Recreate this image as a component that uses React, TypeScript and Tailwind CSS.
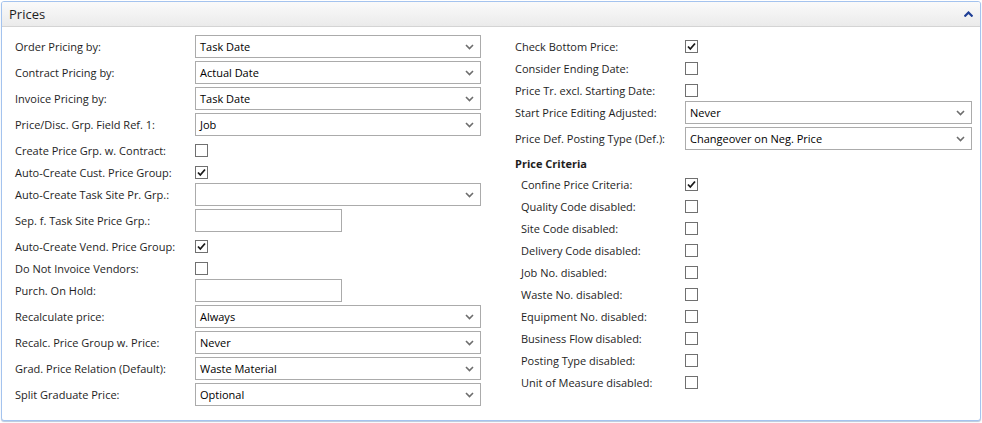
import React from 'react';

type Row =
  | { kind: 'select'; label: string; value: string }
  | { kind: 'input'; label: string }
  | { kind: 'check'; label: string; checked?: boolean };

const LEFT_ROWS: Row[] = [
  { kind: 'select', label: 'Order Pricing by:', value: 'Task Date' },
  { kind: 'select', label: 'Contract Pricing by:', value: 'Actual Date' },
  { kind: 'select', label: 'Invoice Pricing by:', value: 'Task Date' },
  { kind: 'select', label: 'Price/Disc. Grp. Field Ref. 1:', value: 'Job' },
  { kind: 'check', label: 'Create Price Grp. w. Contract:' },
  { kind: 'check', label: 'Auto-Create Cust. Price Group:', checked: true },
  { kind: 'select', label: 'Auto-Create Task Site Pr. Grp.:', value: '' },
  { kind: 'input', label: 'Sep. f. Task Site Price Grp.:' },
  { kind: 'check', label: 'Auto-Create Vend. Price Group:', checked: true },
  { kind: 'check', label: 'Do Not Invoice Vendors:' },
  { kind: 'input', label: 'Purch. On Hold:' },
  { kind: 'select', label: 'Recalculate price:', value: 'Always' },
  { kind: 'select', label: 'Recalc. Price Group w. Price:', value: 'Never' },
  { kind: 'select', label: 'Grad. Price Relation (Default):', value: 'Waste Material' },
  { kind: 'select', label: 'Split Graduate Price:', value: 'Optional' },
];

const RIGHT_ROWS: Row[] = [
  { kind: 'check', label: 'Check Bottom Price:', checked: true },
  { kind: 'check', label: 'Consider Ending Date:' },
  { kind: 'check', label: 'Price Tr. excl. Starting Date:' },
  { kind: 'select', label: 'Start Price Editing Adjusted:', value: 'Never' },
  { kind: 'select', label: 'Price Def. Posting Type (Def.):', value: 'Changeover on Neg. Price' },
];

const CRITERIA: Row[] = [
  { kind: 'check', label: 'Confine Price Criteria:', checked: true },
  { kind: 'check', label: 'Quality Code disabled:' },
  { kind: 'check', label: 'Site Code disabled:' },
  { kind: 'check', label: 'Delivery Code disabled:' },
  { kind: 'check', label: 'Job No. disabled:' },
  { kind: 'check', label: 'Waste No. disabled:' },
  { kind: 'check', label: 'Equipment No. disabled:' },
  { kind: 'check', label: 'Business Flow disabled:' },
  { kind: 'check', label: 'Posting Type disabled:' },
  { kind: 'check', label: 'Unit of Measure disabled:' },
];

const Checkbox: React.FC<{ checked?: boolean }> = ({ checked }) => (
  <div className="w-[13px] h-[13px] border border-[#707070] bg-white flex items-center justify-center">
    {checked && (
      <svg width="9" height="9" viewBox="0 0 9 9">
        <path d="M1 4.5 L3.3 7 L8 1.5" fill="none" stroke="#1a1a1a" strokeWidth="1.8" />
      </svg>
    )}
  </div>
);

const Chevron = () => (
  <svg width="9" height="6" viewBox="0 0 9 6" className="mr-[6px]">
    <path d="M1 1 L4.5 4.5 L8 1" fill="none" stroke="#6d6d6d" strokeWidth="1.6" />
  </svg>
);

const Field: React.FC<{ row: Row; labelW: string; indent?: boolean }> = ({ row, labelW, indent }) => {
  const label = (
    <div className={`${labelW} shrink-0 text-[#1e1e1e] ${indent ? 'pl-[6px]' : ''}`}>{row.label}</div>
  );
  if (row.kind === 'check') {
    return (
      <div className="flex items-center h-[22px]">
        {label}
        <Checkbox checked={row.checked} />
      </div>
    );
  }
  if (row.kind === 'input') {
    return (
      <div className="flex items-center h-[26px] pb-[3px]">
        {label}
        <div className="w-[147px] h-[23px] border border-[#ababab] bg-white" />
      </div>
    );
  }
  return (
    <div className="flex items-center h-[26px] pb-[3px]">
      {label}
      <div className="flex-1 h-[23px] border border-[#ababab] bg-white flex items-center justify-between">
        <span className="pl-[4px] text-black">{row.value}</span>
        <Chevron />
      </div>
    </div>
  );
};

export default function App() {
  return (
    <div
      className="w-[982px] h-[423px] bg-white p-px text-[11px] leading-none"
      style={{ fontFamily: '"Open Sans", "Noto Sans", sans-serif' }}
    >
      <div className="h-[420px] rounded-[3px] border border-[#a4c3ee] shadow-[0_1px_1px_#b9c9dc] bg-white flex flex-col overflow-hidden">
        {/* Header */}
        <div className="h-[25px] shrink-0 flex items-center justify-between pl-[7px] pr-[7px] bg-gradient-to-b from-[#fafafa] to-[#ebebeb] border-b border-[#d4d4d4]">
          <span className="text-[13px] text-[#1e1e1e]">Prices</span>
          <svg width="9" height="6" viewBox="0 0 9 6">
            <path d="M0.5 5.5 L4.5 1.5 L8.5 5.5" fill="none" stroke="#1f3f96" strokeWidth="2.2" />
          </svg>
        </div>

        {/* Body */}
        <div className="flex pt-[8px] pl-[13px] pr-[7px]">
          <div className="w-[466px] flex flex-col">
            {LEFT_ROWS.map((r, i) => (
              <Field key={i} row={r} labelW="w-[180px]" />
            ))}
          </div>
          <div className="w-[457px] ml-[34px] flex flex-col">
            {RIGHT_ROWS.map((r, i) => (
              <Field key={i} row={r} labelW="w-[170px]" />
            ))}
            <div className="h-[20px] flex items-center font-bold text-[#1e1e1e]">Price Criteria</div>
            {CRITERIA.map((r, i) => (
              <Field key={i} row={r} labelW="w-[170px]" indent />
            ))}
          </div>
        </div>
      </div>
    </div>
  );
}
